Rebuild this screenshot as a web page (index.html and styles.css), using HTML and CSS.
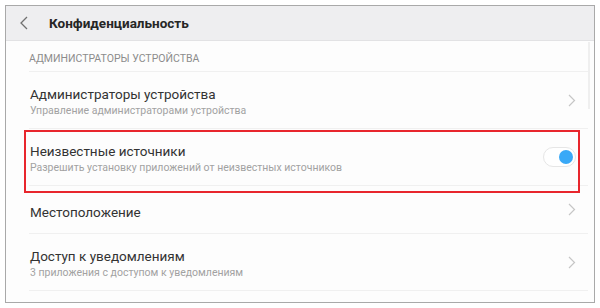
FILE: index.html
```html
<!DOCTYPE html>
<html lang="ru">
<head>
  <meta charset="UTF-8" />
  <title>Конфиденциальность</title>
  <link rel="stylesheet" href="styles.css">
</head>
<body>
  <div class="frame">
    <header class="topbar">
      <svg class="back" width="8" height="14" viewBox="0 0 8 14" aria-hidden="true">
        <polyline points="7,1 1,7 7,13" fill="none" stroke="#707070" stroke-width="1.3"/>
      </svg>
      <h1>Конфиденциальность</h1>
    </header>

    <div class="list">
      <div class="section-label">АДМИНИСТРАТОРЫ УСТРОЙСТВА</div>

      <div class="row">
        <div class="row-text">
          <div class="row-title">Администраторы устройства</div>
          <div class="row-sub">Управление администраторами устройства</div>
        </div>
        <svg class="chevron" width="8" height="13" viewBox="0 0 8 13"><polyline points="1,1 6.5,6.5 1,12" fill="none" stroke="#c6c6c6" stroke-width="1.2"/></svg>
      </div>

      <div class="row">
        <div class="row-text">
          <div class="row-title">Неизвестные источники</div>
          <div class="row-sub">Разрешить установку приложений от неизвестных источников</div>
        </div>
        <div class="toggle on"><span class="knob"></span></div>
      </div>

      <div class="row single">
        <div class="row-text">
          <div class="row-title">Местоположение</div>
        </div>
        <svg class="chevron" width="8" height="13" viewBox="0 0 8 13"><polyline points="1,1 6.5,6.5 1,12" fill="none" stroke="#c6c6c6" stroke-width="1.2"/></svg>
      </div>

      <div class="row">
        <div class="row-text">
          <div class="row-title">Доступ к уведомлениям</div>
          <div class="row-sub">3 приложения с доступом к уведомлениям</div>
        </div>
        <svg class="chevron" width="8" height="13" viewBox="0 0 8 13"><polyline points="1,1 6.5,6.5 1,12" fill="none" stroke="#c6c6c6" stroke-width="1.2"/></svg>
      </div>
    </div>

    <!-- scrollbar thumb and highlight box sit over the list -->
    <div class="scroll-thumb"></div>
    <div class="highlight"></div>
  </div>
</body>
</html>
```

FILE: styles.css
```css
* {
  margin: 0;
  padding: 0;
  box-sizing: border-box;
}

body {
  font-family: Roboto, 'Noto Sans', sans-serif;
  background-color: #fff;
  color: #333;
}

.frame {
  position: relative;
  margin: 5px 0 0 5px;
  width: 590px;
  height: 298px;
  border: 1px solid #a9a9a9;
  background-color: #fdfdfd;
  overflow: hidden;
}

.topbar {
  height: 35px;
  background-color: #eeeef0;
  border-bottom: 1px solid #e2e2e4;
  display: flex;
  align-items: center;
  padding-left: 14px;
}

.back {
  margin-right: 21px;
}

.topbar h1 {
  font-size: 13.5px;
  font-weight: 700;
  color: #262626;
}

.list {
  padding: 0 6px 0 23px;
}

.section-label {
  font-size: 10.5px;
  line-height: 14px;
  color: #8c8c8c;
  padding: 11px 0 5px 0;
  border-bottom: 1px solid #f0f0f0;
}

.row {
  display: flex;
  align-items: flex-start;
  justify-content: space-between;
  height: 57px;
  padding: 14px 12px 0 1px;
  border-bottom: 1px solid #f0f0f0;
}

.row.single {
  height: 48px;
  padding-top: 18px;
}

.row > svg,
.row > .toggle {
  align-self: center;
  margin-top: -14px;
}

.row.single > svg {
  margin-top: -18px;
}

.row-title {
  font-size: 13.5px;
  line-height: 16px;
  color: #333;
}

.row-sub {
  font-size: 10.5px;
  line-height: 14px;
  margin-top: 2px;
  color: #a2a2a2;
}

.toggle {
  width: 33px;
  height: 20px;
  border: 1px solid #e6e6e6;
  border-radius: 10px;
  background-color: #fff;
  display: flex;
  align-items: center;
  justify-content: flex-end;
  padding-right: 2px;
}

.knob {
  width: 14px;
  height: 14px;
  border-radius: 50%;
  background-color: #39a9f7;
}

.scroll-thumb {
  position: absolute;
  left: 582px;
  top: 36px;
  width: 2px;
  height: 67px;
  background-color: #efefef;
}

.highlight {
  position: absolute;
  left: 18px;
  top: 124px;
  width: 556px;
  height: 63px;
  border: 2px solid #e8262d;
}
```
